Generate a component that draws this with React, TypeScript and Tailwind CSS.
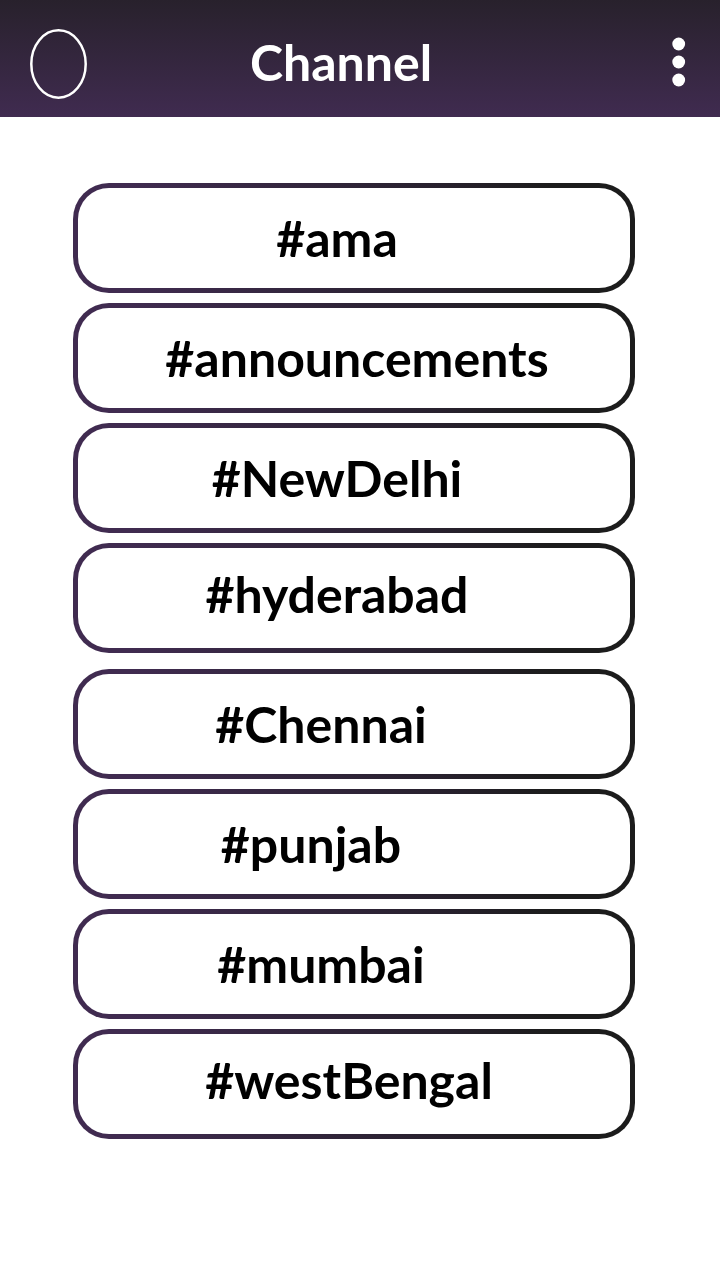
type Channel = { name: string; inset: string };

const groups: Channel[][] = [
  [
    { name: "#ama", inset: "pr-[34px]" },
    { name: "#announcements", inset: "pl-[6px]" },
    { name: "#NewDelhi", inset: "pr-[34px]" },
    { name: "#hyderabad", inset: "pr-[34px] pb-[8px]" },
  ],
  [
    { name: "#Chennai", inset: "pr-[66px]" },
    { name: "#punjab", inset: "pr-[86px]" },
    { name: "#mumbai", inset: "pr-[66px]" },
    { name: "#westBengal", inset: "pr-[10px] pb-[8px]" },
  ],
];

function ChannelButton({ name, inset }: Channel) {
  return (
    <button
      type="button"
      className="block w-full rounded-[36px] bg-linear-to-r from-[#402b50] from-10% via-[#28212e] via-65% to-[#1c1c1c] to-85% p-[5px]"
    >
      <span
        className={`flex h-[100px] items-center justify-center rounded-[31px] bg-white ${inset}`}
      >
        {name}
      </span>
    </button>
  );
}

export default function App() {
  return (
    <div className="min-h-screen bg-white font-['Lato','Open_Sans',sans-serif] text-[50px] leading-[56px] font-bold text-black">
      <header className="flex h-[117px] items-center justify-between bg-linear-to-b from-[#28212c] to-[#402b50] pt-[10px] pr-[28px] pb-[4px] pl-[30px] text-white">
        <div className="flex flex-1 justify-start">
          <button type="button" aria-label="Profile" className="pt-[4px]">
            <svg
              width="57"
              height="70"
              viewBox="0 0 57 70"
              fill="none"
              stroke="currentColor"
              strokeWidth="2.5"
              aria-hidden="true"
            >
              <ellipse cx="28.5" cy="35" rx="27.2" ry="33.7" />
            </svg>
          </button>
        </div>
        <h1 className="pr-[40px]">Channel</h1>
        <div className="flex flex-1 justify-end">
          <button type="button" aria-label="More options" className="p-[6px]">
            <svg width="14" height="50" viewBox="0 0 14 50" fill="currentColor" aria-hidden="true">
              <circle cx="6.7" cy="7" r="6.4" />
              <circle cx="6.7" cy="25" r="6.4" />
              <circle cx="6.7" cy="43" r="6.4" />
            </svg>
          </button>
        </div>
      </header>
      <main className="flex flex-col gap-[16px] pt-[66px] pr-[85px] pb-[66px] pl-[73px]">
        {groups.map((group) => (
          <div key={group[0].name} className="flex flex-col gap-[10px]">
            {group.map((channel) => (
              <ChannelButton key={channel.name} {...channel} />
            ))}
          </div>
        ))}
      </main>
    </div>
  );
}
